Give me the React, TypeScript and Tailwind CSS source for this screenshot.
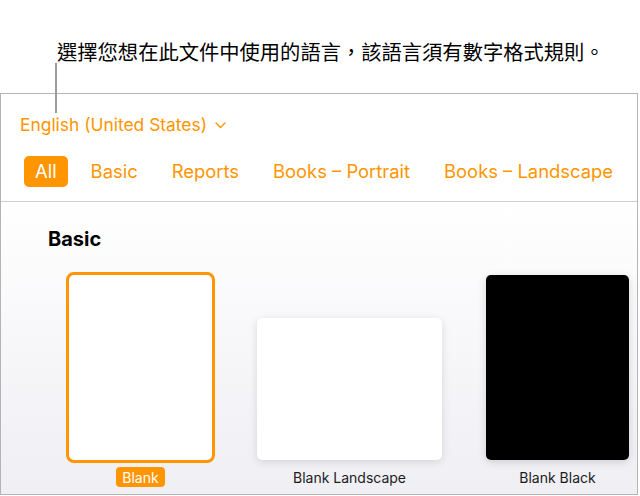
const tabs = ["All", "Basic", "Reports", "Books – Portrait", "Books – Landscape"];

type Template = {
  name: string;
  cardClass: string;
  colClass?: string;
  selected?: boolean;
};

const templates: Template[] = [
  { name: "Blank", cardClass: "w-[143px] h-[185px] bg-white", selected: true },
  { name: "Blank Landscape", cardClass: "w-[185px] h-[142px] bg-white shadow-[0_2px_8px_rgba(0,0,0,0.12)]" },
  {
    name: "Blank Black",
    cardClass: "w-[143px] h-[185px] bg-black shadow-[0_2px_8px_rgba(0,0,0,0.15)]",
    colClass: "-ml-px",
  },
];

function Chevron() {
  return (
    <svg width="11" height="7" viewBox="0 0 11 7" fill="none" className="ml-[8px] mt-[2px]">
      <path d="M1 1l4.5 4.5L10 1" stroke="#ff9500" strokeWidth="1.4" strokeLinecap="round" strokeLinejoin="round" />
    </svg>
  );
}

export default function App() {
  return (
    <div className="relative w-[640px] h-[496px] bg-white overflow-hidden font-['Inter','Noto_Sans',sans-serif]">
      {/* callout */}
      <div className="h-[93px] pt-[36px] pl-[57px]">
        <p className="text-[20.3px] leading-[30px] text-black font-['Noto_Sans_CJK_TC',sans-serif]">
          選擇您想在此文件中使用的語言，該語言須有數字格式規則。
        </p>
      </div>
      <div className="absolute left-[55px] top-[63px] w-[2px] h-[50px] bg-[#9a9a9a]" />

      <div className="w-[638px] h-[402px] border border-[#b4b4b4] flex flex-col">
        <div className="border-b border-[#cfcfcf] pb-[14px]">
          <div className="pl-[19px] pt-[18px] flex items-center">
            <span className="text-[17.4px] leading-[25px] text-[#ff9500]">English (United States)</span>
            <Chevron />
          </div>
          <div className="flex items-center gap-[12px] pl-[23px] mt-[19px]">
            {tabs.map((t, i) => (
              <div
                key={t}
                className={`h-[31px] px-[11px] flex items-center rounded-[5px] text-[18.4px] ${
                  i === 0 ? "bg-[#ff9500] text-white" : "text-[#ff9500]"
                }`}
              >
                {t}
              </div>
            ))}
          </div>
        </div>

        <div className="flex-1 bg-linear-to-b from-white to-[#efeff4]">
          <h2 className="pl-[47px] mt-[25px] text-[20px] leading-[24px] font-bold text-black">Basic</h2>
          <div className="flex items-end gap-[45px] pl-[68px] mt-[24px]">
            {templates.map((tpl) => (
              <div key={tpl.name} className={`flex flex-col items-center ${tpl.colClass ?? ""}`}>
                <div
                  className={`${tpl.cardClass} rounded-[5px] ${
                    tpl.selected ? "outline-3 outline-[#ff9500]" : ""
                  }`}
                />
                <div
                  className={`mt-[7px] h-[20px] flex items-center text-[14px] rounded-[4px] ${
                    tpl.selected ? "bg-[#ff9500] text-white px-[6px]" : "text-[#1c1c1e]"
                  }`}
                >
                  {tpl.name}
                </div>
              </div>
            ))}
          </div>
        </div>
      </div>
    </div>
  );
}
